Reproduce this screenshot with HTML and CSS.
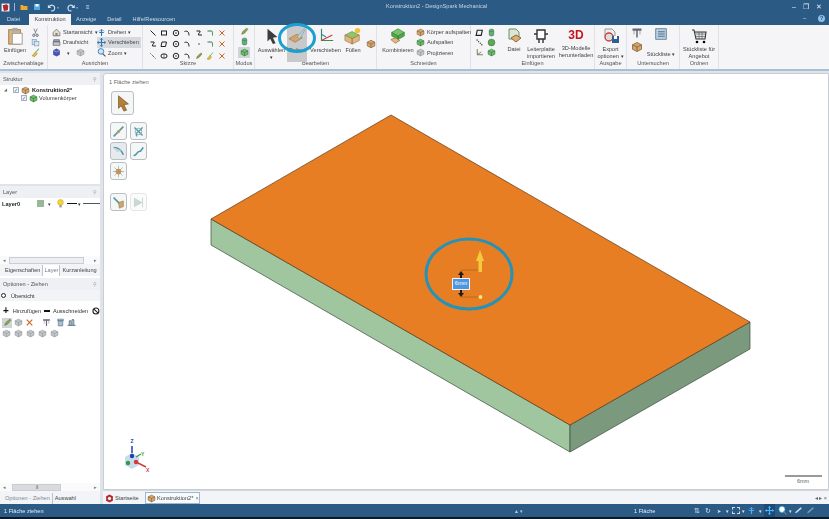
FILE: index.html
```html
<!DOCTYPE html>
<html lang="de">
<head>
<meta charset="utf-8">
<title>Konstruktion2 - DesignSpark Mechanical</title>
<link rel="stylesheet" href="styles.css">
</head>
<body>
<svg class="defs" aria-hidden="true">
  <symbol id="box" viewBox="0 0 16 16"><path d="M8 2l6 3v6l-6 3-6-3V5z" fill="#d9a66a" stroke="#7a5a35"/><path d="M2 5l6 3 6-3M8 8v6" fill="none" stroke="#7a5a35"/></symbol>
  <symbol id="gbox" viewBox="0 0 16 16"><path d="M8 2l6 3v6l-6 3-6-3V5z" fill="#6fbf6a" stroke="#2f6f35"/><path d="M2 5l6 3 6-3M8 8v6" fill="none" stroke="#2f6f35"/></symbol>
  <symbol id="ln" viewBox="0 0 16 16"><path d="M3 3l10 10" stroke="#222" stroke-width="2"/></symbol>
  <symbol id="ld" viewBox="0 0 16 16"><path d="M3 3l10 10" stroke="#222" stroke-width="2" stroke-dasharray="2 2"/></symbol>
  <symbol id="rc" viewBox="0 0 16 16"><rect x="3" y="4" width="10" height="8" fill="none" stroke="#222" stroke-width="2"/></symbol>
  <symbol id="pg" viewBox="0 0 16 16"><path d="M4 4h9l-2 9H2z" fill="none" stroke="#222" stroke-width="2"/></symbol>
  <symbol id="sl" viewBox="0 0 16 16"><rect x="2" y="4" width="12" height="8" rx="4" fill="none" stroke="#222" stroke-width="2"/><path d="M8 4v8" stroke="#222"/></symbol>
  <symbol id="cr" viewBox="0 0 16 16"><circle cx="8" cy="8" r="5.5" fill="none" stroke="#222" stroke-width="2"/><circle cx="8" cy="8" r="1.3"/></symbol>
  <symbol id="ar" viewBox="0 0 16 16"><path d="M3 5c5-2 9 0 9 8" fill="none" stroke="#222" stroke-width="2"/></symbol>
  <symbol id="sp" viewBox="0 0 16 16"><path d="M3 4h7c2 3-5 5-3 8h7" fill="none" stroke="#222" stroke-width="2"/></symbol>
  <symbol id="cn" viewBox="0 0 16 16"><path d="M3 4h8c2 0 2 2 2 9" fill="none" stroke="#2a7d4a" stroke-width="2"/></symbol>
  <symbol id="xx" viewBox="0 0 16 16"><path d="M3 3l10 10M13 3L3 13" stroke="#c9661f" stroke-width="2"/></symbol>
  <symbol id="dt" viewBox="0 0 16 16"><circle cx="8" cy="8" r="1.5" fill="#333"/></symbol>
  <symbol id="pen" viewBox="0 0 16 16"><path d="M3 13l2-5 7-6 2 2-6 7z" fill="#8aa850" stroke="#5d6d35"/></symbol>
  <symbol id="rot" viewBox="0 0 16 16"><path d="M8 2v12M4 8h8" stroke="#2f78b5" stroke-width="2"/><path d="M3 6c2-3 8-3 10 0" fill="none" stroke="#2f78b5"/></symbol>
  <symbol id="mv" viewBox="0 0 16 16"><path d="M8 1v14M1 8h14" stroke="#2f78b5" stroke-width="2"/><path d="M8 0l3 3H5zM8 16l-3-3h6zM0 8l3-3v6zM16 8l-3 3V5z" fill="#2f78b5"/></symbol>
  <symbol id="zm" viewBox="0 0 16 16"><circle cx="7" cy="6" r="5" fill="#cfe3f4" stroke="#2f78b5" stroke-width="1.5"/><path d="M10 10l5 5" stroke="#555" stroke-width="2"/></symbol>
  <symbol id="hm" viewBox="0 0 16 16"><path d="M2 8l6-6 6 6v6H2z" fill="#e9dcc2" stroke="#444"/><rect x="6" y="9" width="4" height="5" fill="#789"/></symbol>
  <symbol id="top" viewBox="0 0 16 16"><path d="M3 3h10v4H3z" fill="#8fb0cc" stroke="#444"/><path d="M2 7h12v6H2z" fill="#c9c9c9" stroke="#444"/></symbol>
  <symbol id="cube" viewBox="0 0 16 16"><path d="M8 1l6 3v8l-6 3-6-3V4z" fill="#4a55b0"/><path d="M2 4l6 3 6-3" fill="none" stroke="#c5c9ee"/></symbol>
  <symbol id="cp" viewBox="0 0 16 16"><rect x="2" y="3" width="8" height="9" fill="#cfe0ef" stroke="#6b8cad"/><rect x="6" y="6" width="8" height="8" fill="#dbe8f3" stroke="#6b8cad"/></symbol>
  <symbol id="sc" viewBox="0 0 16 16"><path d="M5 1l4 9M11 1L7 10" stroke="#778" stroke-width="1.5"/><circle cx="5" cy="13" r="2" fill="none" stroke="#556" stroke-width="1.5"/><circle cx="11" cy="13" r="2" fill="none" stroke="#556" stroke-width="1.5"/></symbol>
  <symbol id="br" viewBox="0 0 16 16"><path d="M14 1L8 8" stroke="#6b7" stroke-width="2"/><path d="M8 7l3 3-4 5-5-1z" fill="#e5c03c" stroke="#a08420"/></symbol>
  <symbol id="sph" viewBox="0 0 16 16"><circle cx="8" cy="8" r="6" fill="#5cab52" stroke="#2f6f35"/></symbol>
  <symbol id="cyl" viewBox="0 0 16 16"><rect x="4" y="2" width="8" height="12" rx="3" fill="#63b07a" stroke="#2f6f45"/><path d="M4 5c2 2 6 2 8 0" fill="none" stroke="#2f6f45"/></symbol>
  <symbol id="axs" viewBox="0 0 16 16"><path d="M4 2v10h10" fill="none" stroke="#3a7a45" stroke-width="1.5"/><path d="M4 12l7-5" stroke="#c84a3a" stroke-width="1.5"/></symbol>
  <symbol id="gray" viewBox="0 0 16 16"><path d="M8 2l6 3v6l-6 3-6-3V5z" fill="#c3c7c9" stroke="#8d9193"/><path d="M2 5l6 3 6-3M8 8v6" fill="none" stroke="#8d9193"/></symbol>
  <symbol id="cal" viewBox="0 0 16 16"><path d="M2 2h12v3H9v9H7V5H2z" fill="#667" /><path d="M4 5v5M12 5v5" stroke="#889"/></symbol>
  <symbol id="tk" viewBox="0 0 16 16"><path d="M3 2h10v3H3zM4 5h8v9H4z" fill="#a9c0d2" stroke="#4d6a80"/></symbol>
  <symbol id="st" viewBox="0 0 16 16"><path d="M1 13h14M4 13V5h3v8M9 13V3h3v10" fill="none" stroke="#3d5f78" stroke-width="1.5"/></symbol>
</svg>

<div class="app">
  <header class="chrome">
    <div class="titlerow">
      <div class="qat">
        <svg class="logo" viewBox="0 0 16 16"><rect x="1" y="1" width="14" height="14" fill="#f4f4f4"/><path d="M3 4l7-2 3 3-1 8-7 1z" fill="#b3262b"/></svg>
        <span class="qsep"></span>
        <svg class="qi" viewBox="0 0 16 16"><path d="M1 4h5l1 2h8v8H1z" fill="#f0a830"/></svg>
        <svg class="qi" viewBox="0 0 16 16"><rect x="2" y="2" width="12" height="12" fill="#4fa8e0"/><rect x="5" y="2" width="6" height="5" fill="#fff"/></svg>
        <svg class="qi wide" viewBox="0 0 22 16"><path d="M3 7c3-5 10-4 10 2s-4 5-6 5" fill="none" stroke="#cfe3f4" stroke-width="2"/><path d="M1 3v6h6z" fill="#cfe3f4"/><path d="M17 8l2 2 2-2z" fill="#cfe3f4"/></svg>
        <svg class="qi wide" viewBox="0 0 22 16"><path d="M13 7C10 2 3 3 3 9s4 5 6 5" fill="none" stroke="#cfe3f4" stroke-width="2"/><path d="M15 3v6H9z" fill="#cfe3f4"/><path d="M17 8l2 2 2-2z" fill="#cfe3f4"/></svg>
        <span class="qmore">≡</span>
      </div>
      <div class="title">Konstruktion2 - DesignSpark Mechanical</div>
      <div class="winbtns"><span>–</span><span>❐</span><span>✕</span></div>
    </div>
    <nav class="tabrow">
      <span class="tab first">Datei</span>
      <span class="tab active">Konstruktion</span>
      <span class="tab">Anzeige</span>
      <span class="tab">Detail</span>
      <span class="tab">Hilfe/Ressourcen</span>
      <span class="help"><span>–</span><b>?</b></span>
    </nav>
  </header>

  <section class="ribbon">
    <div class="grp g-clip">
      <div class="gbody">
        <div class="big w-paste">
          <svg class="i18" viewBox="0 0 20 20"><rect x="3" y="3" width="13" height="16" fill="#d8b67c" stroke="#9a7b45"/><rect x="7" y="1" width="6" height="4" fill="#aaa"/><rect x="7" y="7" width="11" height="12" fill="#fdfdfd" stroke="#999"/></svg>
          <span>Einfügen</span>
        </div>
        <div class="col c-clip">
          <svg class="i9"><use href="#sc"/></svg><svg class="i9"><use href="#cp"/></svg><svg class="i9"><use href="#br"/></svg>
        </div>
      </div>
      <div class="glabel">Zwischenablage</div>
    </div>

    <div class="grp g-align">
      <div class="gbody">
        <div class="col c-align1">
          <div class="row"><svg class="i9"><use href="#hm"/></svg>Startansicht <i class="dd">▾</i></div>
          <div class="row"><svg class="i9"><use href="#top"/></svg>Draufsicht</div>
          <div class="row"><svg class="i9"><use href="#cube"/></svg><i class="dd gap">▾</i><svg class="i9"><use href="#gray"/></svg></div>
        </div>
        <div class="col c-align2">
          <div class="row"><svg class="i9"><use href="#rot"/></svg>Drehen <i class="dd">▾</i></div>
          <div class="row on"><svg class="i9"><use href="#mv"/></svg>Verschieben</div>
          <div class="row"><svg class="i9"><use href="#zm"/></svg>Zoom <i class="dd">▾</i></div>
        </div>
      </div>
      <div class="glabel">Ausrichten</div>
    </div>

    <div class="grp g-sketch">
      <div class="gbody">
        <div class="sketch">
          <svg><use href="#ln"/></svg><svg><use href="#rc"/></svg><svg><use href="#cr"/></svg><svg><use href="#ar"/></svg><svg><use href="#sp"/></svg><svg><use href="#cn"/></svg><svg><use href="#xx"/></svg>
          <svg><use href="#sp"/></svg><svg><use href="#pg"/></svg><svg><use href="#cr"/></svg><svg><use href="#ar"/></svg><svg><use href="#dt"/></svg><svg><use href="#cn"/></svg><svg><use href="#xx"/></svg>
          <svg><use href="#ld"/></svg><svg><use href="#sl"/></svg><svg><use href="#cr"/></svg><svg><use href="#ar"/></svg><svg><use href="#pen"/></svg><svg><use href="#br"/></svg><svg><use href="#xx"/></svg>
        </div>
      </div>
      <div class="glabel">Skizze</div>
    </div>

    <div class="grp g-mode">
      <div class="gbody">
        <div class="col c-mode">
          <svg class="i9"><use href="#pen"/></svg><svg class="i9"><use href="#cyl"/></svg><span class="modeon"><svg class="i9"><use href="#gbox"/></svg></span>
        </div>
      </div>
      <div class="glabel">Modus</div>
    </div>

    <div class="grp g-edit">
      <div class="gbody">
        <div class="big w-sel">
          <svg class="i18" viewBox="0 0 20 20"><path d="M5 2l11 9-5 1 3 6-3 1-3-6-3 3z" fill="#3c3c3c"/></svg>
          <span>Auswählen</span><i class="dd">▾</i>
        </div>
        <div class="big w-pull">
          <svg class="i18" viewBox="0 0 20 20"><path d="M1 13l9-5 6 4-8 5z" fill="#d5a566" stroke="#8c6a3c" stroke-width=".6"/><path d="M10 11L18 2l1 1-6 10z" fill="#b9d3dc" stroke="#6d8f9b" stroke-width=".6"/></svg>
          <span>Ziehen</span>
        </div>
        <div class="big w-move">
          <svg class="i18" viewBox="0 0 20 20"><path d="M5 2v13h13" fill="none" stroke="#3d8a55" stroke-width="1.3"/><path d="M5 15l12-6" stroke="#c9402f" stroke-width="1.3"/><path d="M5 8l5 3" stroke="#4a7fc2" stroke-width="1.3"/></svg>
          <span>Verschieben</span>
        </div>
        <div class="big w-fill">
          <svg class="i18" viewBox="0 0 20 20"><path d="M1 9l8-4 8 4-8 4z" fill="#93c36d" stroke="#55803a" stroke-width=".6"/><path d="M1 9v6l8 4V13zM17 9v6l-8 4V13z" fill="#e2b77c" stroke="#8c6a3c" stroke-width=".6"/><circle cx="15" cy="4" r="3" fill="#f2c230"/></svg>
          <span>Füllen</span>
        </div>
        <svg class="i10 lone"><use href="#box"/></svg>
      </div>
      <div class="glabel">Bearbeiten</div>
    </div>

    <div class="grp g-cut">
      <div class="gbody">
        <div class="big w-comb">
          <svg class="i18" viewBox="0 0 20 20"><path d="M3 6l7-4 7 4-7 4z" fill="#75c567" stroke="#3a7d35" stroke-width=".7"/><path d="M3 6v4l7 4V10zM17 6v4l-7 4V10z" fill="#4da84a" stroke="#3a7d35" stroke-width=".7"/><path d="M2 14l5-2 5 3-5 3z" fill="#e0b77e" stroke="#8c6a3c" stroke-width=".7"/></svg>
          <span>Kombinieren</span>
        </div>
        <div class="col c-cut">
          <div class="row"><svg class="i9"><use href="#box"/></svg>Körper aufspalten</div>
          <div class="row"><svg class="i9"><use href="#gbox"/></svg>Aufspalten</div>
          <div class="row"><svg class="i9"><use href="#gray"/></svg>Projizieren</div>
        </div>
      </div>
      <div class="glabel">Schneiden</div>
    </div>

    <div class="grp g-ins">
      <div class="gbody">
        <div class="col c-ins1"><svg class="i9"><use href="#pg"/></svg><svg class="i9"><use href="#ld"/></svg><svg class="i9"><use href="#axs"/></svg></div>
        <div class="col c-ins2"><svg class="i9"><use href="#cyl"/></svg><svg class="i9"><use href="#sph"/></svg><svg class="i9"><use href="#gbox"/></svg></div>
        <div class="big w-file">
          <svg class="i16" viewBox="0 0 16 16"><path d="M3 1h7l3 3v7H3z" fill="#dbe7d6" stroke="#708a6c"/><path d="M5 10l5-3 5 3-5 4z" fill="#dcae72" stroke="#8c6a3c"/></svg>
          <span>Datei</span>
        </div>
        <div class="big w-pcb">
          <svg class="i16" viewBox="0 0 16 16"><path d="M4 2h8v9H4z" fill="#fff" stroke="#333" stroke-width="1.4"/><path d="M1 6h3M12 6h3M6 11v4M10 11v4" stroke="#333" stroke-width="1.4"/></svg>
          <span>Leiterplatte importieren</span>
        </div>
        <div class="big w-3d">
          <span class="red3d">3D</span>
          <span>3D-Modelle herunterladen</span>
        </div>
      </div>
      <div class="glabel">Einfügen</div>
    </div>

    <div class="grp g-out">
      <div class="gbody">
        <div class="big w-exp">
          <svg class="i16" viewBox="0 0 16 16"><path d="M2 1h7l3 3v4H2z" fill="#eee" stroke="#999"/><circle cx="6" cy="9" r="4" fill="#ddd" stroke="#c4453a" stroke-width="1.4"/><rect x="9" y="8" width="7" height="7" fill="#2f5f95"/><rect x="11" y="8" width="3" height="3" fill="#fff"/></svg>
          <span>Export optionen <i class="dd">▾</i></span>
        </div>
      </div>
      <div class="glabel">Ausgabe</div>
    </div>

    <div class="grp g-insp">
      <div class="gbody">
        <div class="col c-insp1"><svg class="i12"><use href="#cal"/></svg><svg class="i12"><use href="#box"/></svg></div>
        <div class="big w-bom">
          <svg class="i12 bomic" viewBox="0 0 16 16"><rect x="1" y="1" width="14" height="14" fill="#b9cfe2" stroke="#4d6a80"/><path d="M4 5h9M4 8h9M4 11h9" stroke="#33536b"/></svg>
          <span>Stückliste <i class="dd">▾</i></span>
        </div>
      </div>
      <div class="glabel">Untersuchen</div>
    </div>

    <div class="grp g-ord">
      <div class="gbody">
        <div class="big w-cart">
          <svg class="i16" viewBox="0 0 16 16"><path d="M1 2h2l2 9h9l1-7H4" fill="#dfe5e8" stroke="#333" stroke-width="1.1"/><path d="M5 6h9M5 8.500h9M8 4v7M11 4v7" stroke="#555" stroke-width=".6"/><circle cx="6" cy="14" r="1.300"/><circle cx="13" cy="14" r="1.300"/></svg>
          <span>Stückliste für Angebot</span>
        </div>
      </div>
      <div class="glabel">Ordnen</div>
    </div>
  </section>

  <main class="work">
    <aside class="left">
      <div class="phead">Struktur<em>⚲</em></div>
      <div class="tree">
        <div class="node n1"><i class="tw">◢</i><i class="cb">✓</i><svg class="i9"><use href="#box"/></svg><b>Konstruktion2*</b></div>
        <div class="node n2"><i class="cb">✓</i><svg class="i9"><use href="#gbox"/></svg>Volumenkörper</div>
      </div>
      <div class="phead">Layer<em>⚲</em></div>
      <div class="layers">
        <div class="lrow">
          <b>Layer0</b><i class="swatch"></i><i class="dd">▾</i>
          <svg class="i9" viewBox="0 0 16 16"><circle cx="8" cy="6" r="5" fill="#f4d63a" stroke="#c5a422"/><rect x="6" y="11" width="4" height="4" fill="#999"/></svg>
          <i class="thick"></i><i class="dd">▾</i><i class="thin"></i>
        </div>
        <div class="lspace"></div>
        <div class="scroll"><i>◂</i><span class="track t1"></span><i>▸</i></div>
      </div>
      <div class="ptabs"><span>Eigenschaften</span><span class="on">Layer</span><span>Kurzanleitung</span></div>
      <div class="phead opt">Optionen - Ziehen<em>⚲</em></div>
      <div class="options">
        <div class="ov"><i class="dot"></i>Übersicht</div>
        <div class="addcut"><i class="plus">+</i>Hinzufügen<i class="minus"></i>Ausschneiden<svg class="ban" viewBox="0 0 10 10"><circle cx="5" cy="5" r="3.800" fill="none" stroke="#222" stroke-width="1.400"/><path d="M2.500 2.500l5 5" stroke="#222" stroke-width="1.400"/></svg></div>
        <div class="irow r1"><span class="sel"><svg class="i9"><use href="#pen"/></svg></span><svg class="i9"><use href="#gray"/></svg><svg class="i9"><use href="#xx"/></svg><span class="sp"></span><svg class="i9"><use href="#cal"/></svg><svg class="i9"><use href="#tk"/></svg><svg class="i9"><use href="#st"/></svg></div>
        <div class="irow r2"><svg class="i9"><use href="#gray"/></svg><svg class="i9"><use href="#gray"/></svg><svg class="i9"><use href="#gray"/></svg><svg class="i9"><use href="#gray"/></svg><svg class="i9"><use href="#gray"/></svg></div>
        <div class="lspace"></div>
        <div class="scroll"><i>◂</i><span class="track t2">⦀</span><i>▸</i></div>
      </div>
      <div class="ptabs low"><span>Optionen - Ziehen</span><span class="plain">Auswahl</span></div>
    </aside>

    <div class="center">
      <div class="viewport">
        <svg class="model" viewBox="103 72 726 417" aria-hidden="true">
          <polygon points="211,218 570,424 570,451 211,244" fill="#a0c6a0" stroke="#3c4a3c" stroke-width=".7"/>
          <polygon points="570,424 750,321 750,348 570,451" fill="#7b9a7d" stroke="#3c4a3c" stroke-width=".7"/>
          <polygon points="391,114 750,321 570,424 211,218" fill="#e87e24" stroke="#5a3a1a" stroke-width=".7"/>
          <path d="M461 269h17M461 296h17" stroke="#a8661f" stroke-width=".8"/>
          <path d="M461 270l-3 4h2v3h2v-3h2zM461 296l-3-4h2v-3h2v3h2z" fill="#1d1d1d"/>
          <path d="M480 249l-4 11h2.500v11h3.500v-11h2z" fill="#f5c93c"/>
          <circle cx="480.500" cy="296" r="1.900" fill="#fbe27a"/>
          <ellipse cx="469" cy="273" rx="43" ry="35" fill="none" stroke="#2592b8" stroke-width="3"/>
          <g class="triad">
            <path d="M125 456l7-4 7 4v8l-7 4-7-4z" fill="#c9dbea"/>
            <path d="M132 452v-7" stroke="#2040b0" stroke-width="1.500"/><circle cx="132" cy="455" r="2.200" fill="#2040b0"/>
            <path d="M136 461l10 5" stroke="#d33a3a" stroke-width="1.500"/><circle cx="136" cy="461" r="2.200" fill="#d33a3a"/>
            <circle cx="128" cy="462" r="2.200" fill="#2f9c4a"/><path d="M136 456l5-3" stroke="#2f9c4a" stroke-width="1.200"/>
            <text x="130.500" y="442" class="tz">Z</text><text x="141" y="455" class="ty">Y</text><text x="146" y="471" class="tx">X</text>
          </g>
          <path d="M785 475h37" stroke="#777" stroke-width="1.500"/>
          <text x="803" y="482" class="scale">6mm</text>
        </svg>
        <div class="vlabel">1 Fläche ziehen</div>
        <div class="dimbox">6mm</div>
        <div class="tools">
          <div class="tbtn big-t"><svg viewBox="0 0 20 20"><path d="M5 2l11 9-5 1 3 6-3 1-3-6-3 3z" fill="#b57f35" stroke="#6f4b1b" stroke-width=".7"/></svg></div>
          <div class="tgrid">
            <div class="tbtn"><svg viewBox="0 0 16 16"><path d="M2 14L14 2" stroke="#4f9aa8" stroke-width="2"/><circle cx="8" cy="8" r="2" fill="#c79a5c"/></svg></div>
            <div class="tbtn"><svg viewBox="0 0 16 16"><path d="M3 3l10 10M13 3C9 9 3 9 6 14" fill="none" stroke="#4f9aa8" stroke-width="1.600"/><circle cx="8" cy="8" r="4" fill="none" stroke="#7ca0ad"/></svg></div>
            <div class="tbtn shade"><svg viewBox="0 0 16 16"><path d="M2 3c6 0 10 4 12 9" fill="none" stroke="#4f9aa8" stroke-width="2"/><path d="M2 3l4 6 6-2z" fill="#c7d6dc"/></svg></div>
            <div class="tbtn"><svg viewBox="0 0 16 16"><path d="M2 13c4 0 4-5 7-5s3-4 5-5" fill="none" stroke="#4f9aa8" stroke-width="2"/></svg></div>
            <div class="tbtn"><svg viewBox="0 0 16 16"><path d="M8 1v14M1 8h14M3 3l10 10M13 3L3 13" stroke="#9db4bd"/><circle cx="8" cy="8" r="3.500" fill="#c7935a"/></svg></div>
          </div>
          <div class="tgrid last">
            <div class="tbtn"><svg viewBox="0 0 16 16"><path d="M2 2l8 8" stroke="#4f9aa8" stroke-width="2"/><path d="M8 8l6-2v7l-5 2z" fill="#cfa56e" stroke="#8c6a3c" stroke-width=".6"/></svg></div>
            <div class="tbtn faded"><svg viewBox="0 0 16 16"><path d="M3 3l9 5-9 5zM13 2v12" fill="#c8dcd0" stroke="#bcd0c6"/></svg></div>
          </div>
        </div>
      </div>
      <div class="doctabs">
        <span class="dtab"><svg class="i9" viewBox="0 0 16 16"><path d="M8 1l6 3v8l-6 3-6-3V4z" fill="#b3262b"/><circle cx="8" cy="8" r="3" fill="#eee"/></svg>Startseite</span>
        <span class="dtab cur"><svg class="i9"><use href="#box"/></svg>Konstruktion2* <i>×</i></span>
        <span class="dnav">◂ ▸ ×</span>
      </div>
    </div>
  </main>

  <footer class="status">
    <span class="st-left">1 Fläche ziehen</span>
    <span class="st-tri">▲ ▾</span>
    <span class="st-mid">1 Fläche</span>
    <span class="st-icons">
      <i class="w">⇅</i><i class="w">↻</i><i class="w sm">➤</i><i class="w xs">▾</i><i class="w box"></i><i class="w xs">▾</i>
      <svg class="i9"><use href="#rot"/></svg><i class="w xs">▾</i><span class="act"><svg class="i9"><use href="#mv"/></svg></span><svg class="i9"><use href="#zm"/></svg><i class="w xs">▾</i>
      <svg class="i9 lt" viewBox="0 0 16 16"><path d="M2 13l3-1L14 4l-2-2-9 8z" fill="#bfe0f5"/></svg>
      <svg class="i9 dim" viewBox="0 0 16 16"><path d="M2 13l3-1L14 4l-2-2-9 8z" fill="#7d9cb8"/></svg>
    </span>
  </footer>
</div>

<svg class="callout" viewBox="0 0 38 30" aria-hidden="true"><ellipse cx="19" cy="15" rx="17.500" ry="13.500" fill="none" stroke="#1b9fd0" stroke-width="3"/></svg>
</body>
</html>
```

FILE: styles.css
```css
* { box-sizing: border-box; }
html, body { margin: 0; height: 100%; overflow: hidden; background: #dfe3ea; }
body { position: relative; width: 829px; height: 519px; font: 5.6px/8px "Liberation Sans", Arial, sans-serif; color: #333; }
i, em { font-style: normal; }
.defs { position: absolute; width: 0; height: 0; }
.app { display: flex; flex-direction: column; width: 829px; height: 519px; filter: blur(.3px); }

.chrome { height: 25px; background: #2b5a85; color: #d8e4ef; flex: none; }
.titlerow { height: 14px; display: flex; align-items: center; position: relative; padding-left: 1px; }
.qat { display: flex; align-items: center; gap: 4px; }
.logo { width: 9px; height: 9px; }
.qsep { width: 1px; height: 8px; background: #9fb6cb; }
.qi { width: 8px; height: 8px; margin-left: 1px; }
.qi.wide { width: 13px; height: 9px; margin-left: 2px; }
.qmore { font-size: 6px; margin-left: 3px; }
.title { position: absolute; left: 386px; top: 2px; color: #c6d6e4; }
.winbtns { margin-left: auto; display: flex; gap: 7px; font-size: 7px; width: 37px; color: #e9f0f6; }
.tabrow { height: 11px; display: flex; align-items: stretch; padding-left: 7px; }
.tab { padding: 1px 0 0; margin-right: 11px; color: #cfdce8; }
.tab.first { margin-right: 9px; }
.tab.active { background: #f5f5f7; color: #444; padding: 1px 0 0; width: 42px; margin-right: 5px; text-align: center; white-space: nowrap; }
.help { margin-left: auto; display: flex; gap: 12px; width: 26px; color: #dce8f2; }
.help b { width: 7px; height: 7px; border-radius: 50%; background: #8fc0e8; color: #2b5a85; font-size: 6px; line-height: 7px; text-align: center; margin-top: 1px; }

.ribbon { height: 46px; flex: none; display: flex; background: #f5f5f7; border-bottom: 2px solid #a9bfd6; }
.grp { display: flex; flex-direction: column; border-right: 1px solid #e0e2e6; }
.gbody { flex: 1; display: flex; position: relative; min-height: 0; }
.glabel { height: 10px; text-align: center; color: #555; line-height: 9px; }
.g-clip { width: 48px; }
.g-align { width: 95px; }
.g-sketch { width: 91px; }
.g-mode { width: 21px; }
.g-edit { width: 122px; }
.g-cut { width: 94px; }
.g-ins { width: 124px; }
.g-out { width: 32px; }
.g-insp { width: 53px; }
.g-ord { width: 39px; }

.big { display: flex; flex-direction: column; align-items: center; text-align: center; line-height: 7px; color: #444; padding-top: 2px; flex: none; }
.big > svg { margin-bottom: 2px; }
.big > span { display: block; }
.i18 { width: 18px; height: 18px; flex: none; }
.i16 { width: 16px; height: 16px; flex: none; margin-top: 1px; }
.i12 { width: 12px; height: 12px; flex: none; }
.i10 { width: 10px; height: 10px; flex: none; }
.i9 { width: 9px; height: 9px; flex: none; }
.dd { font-size: 5px; color: #333; }
.col { display: flex; flex-direction: column; justify-content: space-around; padding: 2px 0 1px; }
.row { display: flex; align-items: center; gap: 2px; height: 11px; white-space: nowrap; color: #444; }
.row.on { background: #d6d9dd; }

.w-paste { width: 30px; }
.c-clip { align-items: center; width: 11px; }
.c-align1 { width: 49px; padding-left: 4px; }
.c-align2 { width: 44px; }
.dd.gap { margin: 0 4px; }
.sketch { display: grid; grid-template-columns: repeat(7, 11.500px); grid-auto-rows: 11.500px; justify-items: center; align-items: center; padding: 2px 0 0 4px; }
.sketch svg { width: 8px; height: 8px; }
.c-mode { width: 20px; align-items: center; }
.modeon { background: #cfd5d8; width: 12px; height: 11px; display: flex; justify-content: center; align-items: center; }
.w-sel { width: 27px; margin-left: 3px; }
.w-pull { width: 20px; margin-left: 2px; background: #c8c9ca; height: 36px; margin-top: 1px; padding-top: 1px; }
.w-move { width: 31px; margin-left: 3px; }
.w-fill { width: 20px; margin-left: 2px; }
.lone { margin: 14px 0 0 3px; }
.w-comb { width: 30px; margin-left: 6px; }
.c-cut { margin-left: 3px; }
.c-ins1 { width: 13px; margin-left: 3px; align-items: center; }
.c-ins2 { width: 14px; align-items: center; }
.w-file { width: 20px; margin-left: 7px; }
.w-pcb { width: 34px; }
.w-3d { width: 36px; }
.red3d { font: bold 12px/15px "Liberation Sans", Arial, sans-serif; color: #c4161c; margin: 1px 0 2px; }
.w-exp { width: 31px; }
.c-insp1 { width: 18px; align-items: center; padding-left: 2px; justify-content: flex-start; gap: 2px; }
.w-bom { width: 32px; }
.bomic { margin: 1px 0 11px !important; }
.w-cart { width: 38px; }

.work { flex: 1; display: flex; min-height: 0; padding-top: 2px; }
.left { width: 100px; flex: none; display: flex; flex-direction: column; background: #fff; margin-right: 3px; }
.phead { height: 12px; flex: none; background: #eef0f4; color: #555; display: flex; justify-content: space-between; align-items: center; padding: 0 3px; }
.phead em { color: #999; font-size: 5px; }
.tree { height: 101px; flex: none; background: #fff; border-bottom: 2px solid #dfe3ea; padding-top: 1px; }
.node { display: flex; align-items: center; gap: 1px; height: 8px; }
.node b { color: #222; margin-left: 1px; }
.n1 { padding-left: 4px; }
.n2 { padding-left: 21px; color: #444; }
.tw { font-size: 4px; color: #666; width: 8px; }
.cb { width: 6px; height: 6px; border: 1px solid #a8aeb5; font-size: 5px; line-height: 4px; color: #3b6ea8; background: #eef3f8; margin-right: 1px; }
.layers { height: 66px; flex: none; display: flex; flex-direction: column; background: #fff; }
.lrow { height: 11px; display: flex; align-items: center; padding-left: 2px; }
.lrow b { width: 35px; color: #222; }
.swatch { width: 7px; height: 7px; background: #9ab79a; margin-right: 4px; }
.lrow svg { margin: 0 2px 0 5px; }
.thick { width: 10px; height: 1.500px; background: #111; margin-right: 1px; }
.thin { flex: 1; height: 1px; background: #555; margin-left: 2px; }
.lspace { flex: 1; }
.scroll { height: 8px; display: flex; align-items: center; justify-content: space-between; color: #777; font-size: 5px; padding: 0 3px; background: #fafafa; flex: none; }
.track { height: 7px; border: 1px solid #c9ced4; background: #eceef1; display: block; text-align: center; line-height: 5px; color: #666; }
.t1 { width: 75px; margin-right: 10px; margin-left: 2px; }
.t2 { width: 49px; margin-left: 2px; margin-right: 29px; background: #d8dade; }
.ptabs { height: 12px; flex: none; display: flex; background: #f3f4f7; padding: 1px 0 0 4px; gap: 1px; color: #444; align-items: center; }
.ptabs span { padding: 0 1px; white-space: nowrap; height: 11px; line-height: 11px; }
.ptabs .on { background: #fff; border-left: 1px solid #b8c3cf; border-right: 1px solid #b8c3cf; color: #6a7d90; }
.ptabs.low { height: 13px; }
.ptabs.low span:first-child { color: #7c8894; border-right: 1px solid #b8c3cf; padding-right: 2px; }
.opt { margin-top: 2px; }
.options { flex: 1; min-height: 0; display: flex; flex-direction: column; background: #fff; }
.ov { height: 11px; display: flex; align-items: center; gap: 5px; background: #f3f4f7; padding-left: 1px; flex: none; }
.dot { width: 5px; height: 5px; border-radius: 50%; background: #fff; border: 1.500px solid #222; }
.addcut { height: 12px; margin-top: 4px; display: flex; align-items: center; padding-left: 3px; white-space: nowrap; flex: none; }
.plus { font: bold 10px/8px "Liberation Sans", Arial, sans-serif; color: #111; width: 10px; }
.minus { width: 6px; height: 1.500px; background: #111; margin: 0 3px; }
.ban { width: 8px; height: 8px; margin-left: 4px; }
.irow { display: flex; align-items: center; gap: 2px; height: 11px; padding-left: 2px; flex: none; }
.sel { background: #d0d4d8; width: 10px; height: 10px; display: flex; align-items: center; justify-content: center; }
.sp { width: 4px; }
.r1 svg:nth-last-child(2) { margin-left: 3px; }
.r2 { gap: 3px; }

.center { flex: 1; min-width: 0; display: flex; flex-direction: column; }
.viewport { flex: 1; min-height: 0; position: relative; background: #fff; border: 1px solid #c9ced4; border-radius: 3px 0 0 0; overflow: hidden; }
.model { position: absolute; left: -1px; top: -1px; width: 726px; height: 417px; }
.vlabel { position: absolute; left: 5px; top: 4px; color: #666; }
.dimbox { position: absolute; left: 348px; top: 204px; width: 18px; height: 12px; background: #4c97e0; color: #fff; border: 1.500px solid #eef4fa; text-align: center; line-height: 9px; }
.tools { position: absolute; left: 6px; top: 17px; display: flex; flex-direction: column; }
.tbtn { width: 17px; height: 18px; border: 1px solid #b9bfc4; border-radius: 3px; background: #f5f6f6; display: flex; align-items: center; justify-content: center; }
.tbtn svg { width: 13px; height: 13px; }
.big-t { width: 23px; height: 24px; margin: 0 0 7px 1px; }
.big-t svg { width: 18px; height: 18px; }
.tgrid { display: grid; grid-template-columns: 17px 17px; gap: 2px 3px; }
.tgrid.last { margin-top: 13px; }
.shade { background: #e6eaec; }
.faded { border-color: #e4e7e9; background: #fbfbfb; }
.tz, .ty, .tx { font: bold 5px "Liberation Sans", Arial, sans-serif; }
.tz { fill: #2040b0; } .ty { fill: #2f9c4a; } .tx { fill: #d33a3a; }
.scale { font: 5.500px "Liberation Sans", Arial, sans-serif; fill: #666; text-anchor: middle; }
.doctabs { height: 14px; flex: none; display: flex; align-items: center; background: #f3f4f7; padding: 1px 0 0 2px; color: #444; border-top: 1px solid #d5d9de; }
.dtab { display: flex; align-items: center; gap: 1px; height: 12px; white-space: nowrap; }
.dtab:first-child { width: 40px; }
.dtab.cur { border: 1px solid #9db8d2; width: 55px; padding-left: 1px; background: #f8fafc; }
.dtab i { color: #777; margin-left: 1px; }
.dnav { margin-left: auto; color: #666; padding-right: 2px; font-size: 5.500px; }

.status { height: 15px; flex: none; background: #2b5a85; border-bottom: 2px solid #0c1a28; display: flex; align-items: center; color: #e4edf5; }
.st-left { margin-left: 4px; width: 510px; }
.st-tri { width: 120px; color: #b8cde0; font-size: 5px; }
.st-mid { width: 58px; }
.st-icons { flex: 1; display: flex; align-items: center; gap: 2.400px; }
.w { color: #dce8f2; width: 9px; text-align: center; font-size: 7px; }
.w.sm { font-size: 5px; }
.w.xs { width: 3px; font-size: 5px; }
.w.box { width: 8px; height: 7px; border: 1px dashed #cfdce8; }
.act { background: #1f4a73; width: 11px; height: 13px; display: flex; align-items: center; justify-content: center; }
.status svg use { filter: brightness(1.500); }

.callout { position: absolute; left: 278px; top: 23px; width: 38px; height: 30px; }
```
